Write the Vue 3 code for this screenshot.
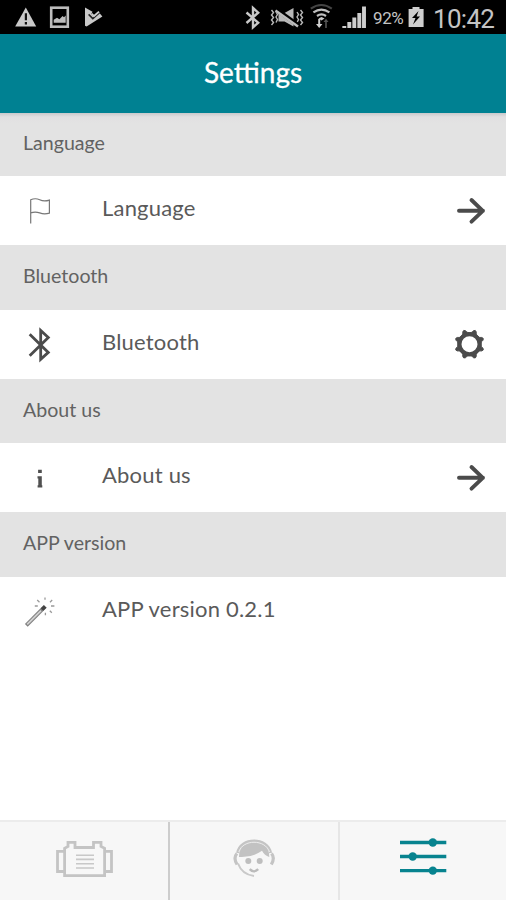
<script setup>
const sections = [
  { title: 'Language', label: 'Language', icon: 'flag', action: 'arrow' },
  { title: 'Bluetooth', label: 'Bluetooth', icon: 'bluetooth', action: 'gear' },
  { title: 'About us', label: 'About us', icon: 'info', action: 'arrow' },
  { title: 'APP version', label: 'APP version 0.2.1', icon: 'wand', action: null },
]
const teeth = [22.5, 67.5, 112.5, 157.5, 202.5, 247.5, 292.5, 337.5]
</script>

<template>
  <div class="screen">
    <div class="status">
      <svg class="status-left" width="90" height="34" viewBox="14 0 90 34">
        <path d="M25.8 7.5 36.2 26.5H15.2Z" fill="#c9c9c9" />
        <path d="M25.9 13.2v7M25.9 22v2.4" stroke="#111" stroke-width="2.2" />
        <rect x="51.2" y="7.7" width="16.6" height="19" fill="none" stroke="#bdbdbd" stroke-width="2.6" />
        <path d="M53.7 22.8v-3l3.3-2 2.4 1.4 3.2-3.2 1.4 1.2 1.7-1.6v7.2Z" fill="#bdbdbd" />
        <path d="M85 7.6 92.5 11.8 91 14.5 93.8 16.6 98.6 12 102.4 16.6 86.6 26.4 85 25.8Z" fill="#c9c9c9" />
        <path d="M88.6 14.4 92.8 18.6 99.8 12.4" fill="none" stroke="#222" stroke-width="1.5" />
        <path d="M91.5 13.8 94 16 99 11.6" fill="none" stroke="#d0d0d0" stroke-width="1.8" />
      </svg>
      <svg class="status-right" width="125" height="34" viewBox="244 0 125 34">
        <path d="M246.5 12.5 258.2 22.7 253 27.4V8L258.2 12.7 246.5 23" fill="none" stroke="#c9c9c9" stroke-width="2.4" />
        <g fill="none" stroke="#b8b8b8" stroke-width="1.4">
          <path d="m271.5 10 2 2.5-2 2.5 2 2.5-2 2.5 2 2.5-2 2.5M276 12l1.5 2.5-1.5 2.5 1.5 2.5-1.5 3M300.5 10l2 2.5-2 2.5 2 2.5-2 2.5 2 2.5-2 2.5M297 12l1.5 2.5-1.5 2.5 1.5 2.5-1.5 3" />
        </g>
        <path d="M278.5 13h6l9-5v18.5l-9-5h-6Z" fill="#b8b8b8" />
        <path d="m276.5 9.5 22 16" stroke="#000" stroke-width="4.4" />
        <path d="m275.5 10.5 22.5 16" stroke="#bcbcbc" stroke-width="2.4" />
        <g fill="none" stroke-width="2.2">
          <path d="M310.8 8.7q10.5-7.4 21 0" stroke="#444" />
          <path d="M313.4 12.4q8-5.7 16 0" stroke="#c0c0c0" />
          <path d="M317 16q4.5-3.2 9 0" stroke="#c0c0c0" />
        </g>
        <path d="m318.5 18.5 3-1.5 3 1.5-3 2Z" fill="#c9c9c9" />
        <path d="M319.2 19v6" stroke="#d0d0d0" stroke-width="2" />
        <path d="m316 24 3.2 4 3.2-4Z" fill="#d0d0d0" />
        <path d="M326 28v-7" stroke="#555" stroke-width="1.6" />
        <path d="m323.5 22 2.5-3.2 2.5 3.2Z" fill="#555" />
        <path d="M344.3 28v-2M349.3 28v-6M354.3 28v-10.5M359.3 28V13M364 28V6.5" stroke="#cecece" stroke-width="3.9" />
      </svg>
      <span class="percent">92%</span>
      <svg class="battery" width="16" height="22" viewBox="0 0 16 22">
        <path d="M4.5 1h7v2H15.6v18H.6V3h3.9Z" fill="#cecece" />
        <path d="M10.5 5 4 12h3.5L5 18.5 12 10.5H8.6Z" fill="#000" />
      </svg>
      <span class="clock">10:42</span>
    </div>

    <header class="header"><h1>Settings</h1></header>

    <main class="list">
      <template v-for="s in sections" :key="s.title">
        <h2 class="title">{{ s.title }}</h2>
        <div class="row">
          <svg v-if="s.icon === 'flag'" class="icon" width="40" height="40" viewBox="20 190.5 40 40">
            <path d="M30.7 223V199.3q4.6-2.1 9 0t9.7.3V212.6q-5.2 1.5-9.7-.2t-9 0" fill="none" stroke="#777" stroke-width="1.2" />
          </svg>
          <svg v-else-if="s.icon === 'bluetooth'" class="icon" width="40" height="40" viewBox="20 324 40 40">
            <path d="M29.7 334.2 48.3 352.4 40.7 359.4V330.4L48.3 337.5 29.7 355.8" fill="none" stroke="#4b4b4b" stroke-width="2.8" />
          </svg>
          <svg v-else-if="s.icon === 'info'" class="icon" width="40" height="40" viewBox="20 457.5 40 40">
            <path d="M38.1 469.2h3.7v3.3h-3.7ZM37.5 475.8h4.3v9h.5v2.2h-4.7v-2.2h.7v-6.7h-.8Z" fill="#505050" />
          </svg>
          <svg v-else class="icon" width="40" height="40" viewBox="20 591 40 40">
            <path d="M26.3 625.3 45.2 606.4" stroke="#808080" stroke-width="4" />
            <path d="M27.2 624.4 41 610.6" stroke="#d0d0d0" stroke-width="1.8" />
            <path d="M42 609.6 45.2 606.4" stroke="#444" stroke-width="3.6" />
            <path d="M45 597.5v2.2M37.2 600l2.3 2.2M34.8 606h3M52.2 600l-2.2 2.2M51 606h3.4M49.8 610.8l2 2M45.4 612.8v2.5" stroke="#999" stroke-width="1.3" />
          </svg>
          <span class="label">{{ s.label }}</span>
          <svg v-if="s.action === 'arrow'" class="action" width="40" height="40" viewBox="450 191 40 40">
            <path d="M459 210.8H483M471.5 200 482.8 210.8 471.5 221.6" fill="none" stroke="#4b4b4b" stroke-width="3.9" stroke-linecap="round" stroke-linejoin="round" />
          </svg>
          <svg v-else-if="s.action === 'gear'" class="action" width="40" height="40" viewBox="-19.5 -20.2 40 40">
            <circle r="10" fill="none" stroke="#4b4b4b" stroke-width="4" />
            <path v-for="a in teeth" :key="a" :transform="`rotate(${a})`" d="M-4.4-10.6Q-1.8-11.6-1.5-14Q0-15.9 1.5-14Q1.8-11.6 4.4-10.6Z" fill="#4b4b4b" stroke="#4b4b4b" stroke-width=".8" />
          </svg>
        </div>
      </template>
    </main>

    <nav class="tabs">
      <div class="tab">
        <svg width="60" height="44" viewBox="54 836 60 44">
          <g fill="none" stroke="#c4c4c4" stroke-width="2.8">
            <path d="M64.6 875.6V848.3L68 846.5V842.4H75V847.5H93.5V842.4H101V846.5L104.6 848.3V875.6Z" />
            <path d="M64.6 851.3H57.5V871.5H64.6M104.6 851.3H111.5V871.5H104.6" />
          </g>
          <path d="M76 855.2H94M76 859.4H94M76 863.8H94M76 868H94" stroke="#c8c8c8" stroke-width="1.6" />
        </svg>
      </div>
      <div class="tab">
        <svg width="44" height="44" viewBox="231.5 836 44 44">
          <path d="M238.5 857C238 837 269 836 268.8 857Q264 855.5 261.5 850.8Q251 858 238.5 857Z" fill="#c2c2c2" />
          <path d="M237.2 853C240 837 267 837 270 853" fill="none" stroke="#c4c4c4" stroke-width="3.2" />
          <path d="M238.3 852C242 839 265 839 269 852" fill="none" stroke="#f1f1f1" stroke-width=".9" />
          <path d="M236.4 853.5Q232.5 858 236.6 864.5M271 853.5Q274.7 858 270.8 864.5" fill="none" stroke="#c4c4c4" stroke-width="3.2" />
          <path d="M237.5 863.5Q241.5 874.5 253.5 876" fill="none" stroke="#c9c9c9" stroke-width="2" />
          <circle cx="247.8" cy="861" r="3" fill="#bebebe" />
          <circle cx="259.2" cy="861" r="3" fill="#bebebe" />
          <path d="M249.2 869.2Q253.4 873.5 257.7 869.2" fill="none" stroke="#bbb" stroke-width="2.4" />
        </svg>
      </div>
      <div class="tab">
        <svg width="50" height="44" viewBox="398 836 50 44">
          <path d="M400 842.5H446.3M400 856.5H446.3M400 870.6H446.3" stroke="#07838f" stroke-width="3.3" />
          <g fill="#07838f">
            <circle cx="432.8" cy="842.5" r="4.2" />
            <circle cx="412.7" cy="856.5" r="4.2" />
            <circle cx="432.8" cy="870.6" r="4.2" />
          </g>
        </svg>
      </div>
    </nav>
  </div>
</template>

<style>
body {
  margin: 0;
}
</style>

<style scoped>
.screen {
  width: 506px;
  height: 900px;
  display: flex;
  flex-direction: column;
  background: #fff;
  font-family: Lato, "Liberation Sans", sans-serif;
  overflow: hidden;
}
svg {
  display: block;
  flex: none;
}
.status {
  height: 34px;
  flex: none;
  display: flex;
  align-items: center;
  background: #000;
  color: #c4c4c4;
  font-family: Roboto, sans-serif;
  white-space: nowrap;
}
.status-left {
  margin-left: 14px;
}
.status-right {
  margin-left: 140px;
}
.percent {
  width: 35px;
  margin-left: 4px;
  font-size: 17px;
  letter-spacing: -0.4px;
  padding-top: 2px;
}
.battery {
  margin-bottom: 1px;
}
.clock {
  margin-left: 9px;
  padding-top: 4px;
  font-size: 26px;
  letter-spacing: -0.7px;
}
.header {
  height: 79px;
  flex: none;
  box-sizing: border-box;
  padding-bottom: 3px;
  display: flex;
  align-items: center;
  justify-content: center;
  background: #008192;
}
.header h1 {
  margin: 0;
  color: #fff;
  font-size: 28px;
  font-weight: 400;
  -webkit-text-stroke: 0.3px #fff;
}
.list {
  flex: 1;
}
.title {
  box-sizing: border-box;
  height: 64.6px;
  margin: 0;
  padding: 0 0 3px 23px;
  display: flex;
  align-items: center;
  background: #e3e3e3;
  color: #626262;
  font-size: 19.6px;
  font-weight: 400;
}
.title:first-child {
  height: 63px;
  padding-bottom: 5px;
  background: linear-gradient(#c9c9cb, #e1e0e1 4px, #e3e3e3 10px);
}
.row {
  height: 69px;
  display: flex;
  align-items: center;
}
.icon {
  margin-left: 20px;
}
.label {
  margin-left: 42px;
  padding-bottom: 6px;
  color: #5a5a5a;
  font-size: 22px;
  letter-spacing: 0.2px;
}
.action {
  margin-left: auto;
  margin-right: 16px;
}
.tabs {
  height: 80px;
  flex: none;
  box-sizing: border-box;
  display: grid;
  grid-template-columns: 169.5px 170px 166.5px;
  border-top: 2px solid #ececec;
  background: #f7f7f7;
}
.tab {
  box-sizing: border-box;
  display: flex;
  align-items: flex-start;
  justify-content: center;
  padding-top: 14px;
  border-right: 2px solid #cdcdcd;
}
.tab:nth-child(2) {
  border-right-color: #e6e6e6;
}
.tab:last-child {
  border-right: 0;
}
</style>
